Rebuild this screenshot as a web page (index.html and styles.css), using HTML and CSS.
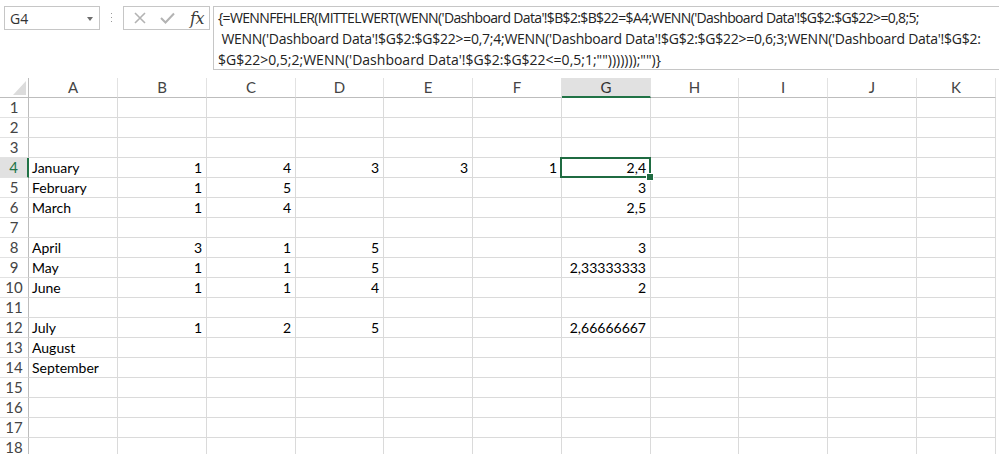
FILE: index.html
```html
<!DOCTYPE html>
<html lang="de">
<head>
<meta charset="utf-8">
<title>Excel</title>
<link rel="stylesheet" href="styles.css">
</head>
<body>
<div class="toolbar">
  <div class="namebox"><span>G4</span><span class="dd"></span></div>
  <div class="sep"><svg width="3" height="12" viewBox="0 0 3 12"><rect x="1" y="1" width="1" height="1" fill="#9a9a9a"/><rect x="1" y="5" width="1" height="1" fill="#9a9a9a"/><rect x="1" y="9" width="1" height="1" fill="#9a9a9a"/></svg></div>
  <div class="fxbox">
    <svg class="ico" width="14" height="14" viewBox="0 0 14 14"><path d="M2 2 L12 12 M12 2 L2 12" stroke="#b3b3b3" stroke-width="1.6" fill="none"/></svg>
    <svg class="ico" width="16" height="14" viewBox="0 0 16 14"><path d="M2 7 L6.5 11.5 L15 2.5" stroke="#b3b3b3" stroke-width="2" fill="none"/></svg>
    <span class="fx">fx</span>
  </div>
  <div class="formula"><div class="fl l1">{=WENNFEHLER(MITTELWERT(WENN('Dashboard Data'!$B$2:$B$22=$A4;WENN('Dashboard Data'!$G$2:$G$22&gt;=0,8;5;</div><div class="fl l2"> WENN('Dashboard Data'!$G$2:$G$22&gt;=0,7;4;WENN('Dashboard Data'!$G$2:$G$22&gt;=0,6;3;WENN('Dashboard Data'!$G$2:</div><div class="fl l3">$G$22&gt;0,5;2;WENN('Dashboard Data'!$G$2:$G$22&lt;=0,5;1;"")))))));"")}</div></div>
</div>
<div class="sheet">
  <div class="corner"></div><div class="ch">A</div><div class="ch">B</div><div class="ch">C</div><div class="ch">D</div><div class="ch">E</div><div class="ch">F</div><div class="ch sel">G</div><div class="ch">H</div><div class="ch">I</div><div class="ch">J</div><div class="ch">K</div>

  <div class="rh">1</div><div></div><div></div><div></div><div></div><div></div><div></div><div></div><div></div><div></div><div></div><div></div>
  <div class="rh">2</div><div></div><div></div><div></div><div></div><div></div><div></div><div></div><div></div><div></div><div></div><div></div>
  <div class="rh">3</div><div></div><div></div><div></div><div></div><div></div><div></div><div></div><div></div><div></div><div></div><div></div>
  <div class="rh sel">4</div><div>January</div><div class="n">1</div><div class="n">4</div><div class="n">3</div><div class="n">3</div><div class="n">1</div><div class="n active">2,4</div><div></div><div></div><div></div><div></div>
  <div class="rh">5</div><div>February</div><div class="n">1</div><div class="n">5</div><div></div><div></div><div></div><div class="n">3</div><div></div><div></div><div></div><div></div>
  <div class="rh">6</div><div>March</div><div class="n">1</div><div class="n">4</div><div></div><div></div><div></div><div class="n">2,5</div><div></div><div></div><div></div><div></div>
  <div class="rh">7</div><div></div><div></div><div></div><div></div><div></div><div></div><div></div><div></div><div></div><div></div><div></div>
  <div class="rh">8</div><div>April</div><div class="n">3</div><div class="n">1</div><div class="n">5</div><div></div><div></div><div class="n">3</div><div></div><div></div><div></div><div></div>
  <div class="rh">9</div><div>May</div><div class="n">1</div><div class="n">1</div><div class="n">5</div><div></div><div></div><div class="n">2,33333333</div><div></div><div></div><div></div><div></div>
  <div class="rh">10</div><div>June</div><div class="n">1</div><div class="n">1</div><div class="n">4</div><div></div><div></div><div class="n">2</div><div></div><div></div><div></div><div></div>
  <div class="rh">11</div><div></div><div></div><div></div><div></div><div></div><div></div><div></div><div></div><div></div><div></div><div></div>
  <div class="rh">12</div><div>July</div><div class="n">1</div><div class="n">2</div><div class="n">5</div><div></div><div></div><div class="n">2,66666667</div><div></div><div></div><div></div><div></div>
  <div class="rh">13</div><div>August</div><div></div><div></div><div></div><div></div><div></div><div></div><div></div><div></div><div></div><div></div>
  <div class="rh">14</div><div>September</div><div></div><div></div><div></div><div></div><div></div><div></div><div></div><div></div><div></div><div></div>
  <div class="rh">15</div><div></div><div></div><div></div><div></div><div></div><div></div><div></div><div></div><div></div><div></div><div></div>
  <div class="rh">16</div><div></div><div></div><div></div><div></div><div></div><div></div><div></div><div></div><div></div><div></div><div></div>
  <div class="rh">17</div><div></div><div></div><div></div><div></div><div></div><div></div><div></div><div></div><div></div><div></div><div></div>
  <div class="rh">18</div><div></div><div></div><div></div><div></div><div></div><div></div><div></div><div></div><div></div><div></div><div></div>
</div>
</body>
</html>
```
FILE: styles.css
```css
* { box-sizing: border-box; }
html, body { margin: 0; padding: 0; background: #fff; }
body {
  width: 999px;
  height: 454px;
  overflow: hidden;
  font-family: Lato, "Liberation Sans", sans-serif;
  color: #000;
}

/* ---------- formula bar ---------- */
.toolbar {
  display: flex;
  align-items: flex-start;
  height: 78px;
  padding: 6px 0 0 4px;
  font-family: "Open Sans", "Noto Sans", sans-serif;
}
.namebox {
  width: 96px;
  height: 24px;
  border: 1px solid #c6c6c6;
  display: flex;
  align-items: center;
  justify-content: space-between;
  padding: 0 6px 0 5px;
  font-size: 14px;
  color: #333;
}
.dd {
  width: 0;
  height: 0;
  border-left: 3px solid transparent;
  border-right: 3px solid transparent;
  border-top: 4px solid #6d6d6d;
  margin-top: 1px;
}
.sep {
  width: 23px;
  height: 24px;
  display: flex;
  align-items: center;
  justify-content: center;
}
.fxbox {
  width: 87px;
  height: 24px;
  border: 1px solid #c6c6c6;
  display: flex;
  align-items: center;
  padding: 0 0 0 9px;
  gap: 12px;
}
.ico { display: block; flex: none; }
.fx {
  font-family: "DejaVu Serif", "Liberation Serif", serif;
  font-style: italic;
  font-size: 16px;
  color: #3a3a3a;
  margin-left: 3px;
  letter-spacing: -0.5px;
}
.formula {
  flex: 1;
  margin-left: 3px;
  height: 64px;
  border: 1px solid #c6c6c6;
  border-right: none;
  padding: 0 0 0 4px;
  font-size: 14px;
  line-height: 21px;
  color: #222;
  overflow: hidden;
}
.fl { white-space: pre; }
.l1 { letter-spacing: -0.65px; }
.l2 { letter-spacing: -0.26px; }

/* ---------- grid ---------- */
.sheet {
  display: grid;
  grid-template-columns: 29px 89px 89px 89px 88px 89px 89px 89px 88px 89px 89px 79px;
  grid-auto-rows: 20px;
  font-size: 14px;
  line-height: 19px;
}
.sheet > div {
  border-right: 1px solid #dadada;
  border-bottom: 1px solid #dadada;
  padding: 0 3px;
  white-space: nowrap;
}
.sheet > .n { text-align: right; padding-right: 4px; }

.sheet > .corner {
  position: relative;
  border-right: 1px solid #bdbdbd;
  border-bottom: 1px solid #bdbdbd;
}
.corner::after {
  content: "";
  position: absolute;
  right: 2px;
  bottom: 2px;
  width: 0;
  height: 0;
  border-left: 13px solid transparent;
  border-bottom: 14px solid #dcdcdc;
}
.sheet > .ch {
  text-align: center;
  color: #444;
  font-size: 15px;
  border-bottom: 1px solid #bdbdbd;
  border-right: 1px solid #e2e2e2;
}
.sheet > .ch.sel {
  background: #e1e1e1;
  border-bottom: 2px solid #217346;
  color: #333;
}
.sheet > .rh {
  text-align: center;
  color: #444;
  font-size: 15px;
  padding: 0;
  border-right: 1px solid #bdbdbd;
  border-bottom: 1px solid #e2e2e2;
}
.sheet > .rh.sel {
  background: #e1e1e1;
  border-right: 2px solid #217346;
  color: #217346;
}

.sheet > .active { position: relative; }
.active::before {
  content: "";
  position: absolute;
  left: -2px;
  top: -1px;
  right: -1px;
  bottom: -1px;
  border: 2px solid #1f6b41;
}
.active::after {
  content: "";
  position: absolute;
  right: -4px;
  bottom: -4px;
  width: 6px;
  height: 6px;
  background: #1f6b41;
  border: 1px solid #fff;
}
```
